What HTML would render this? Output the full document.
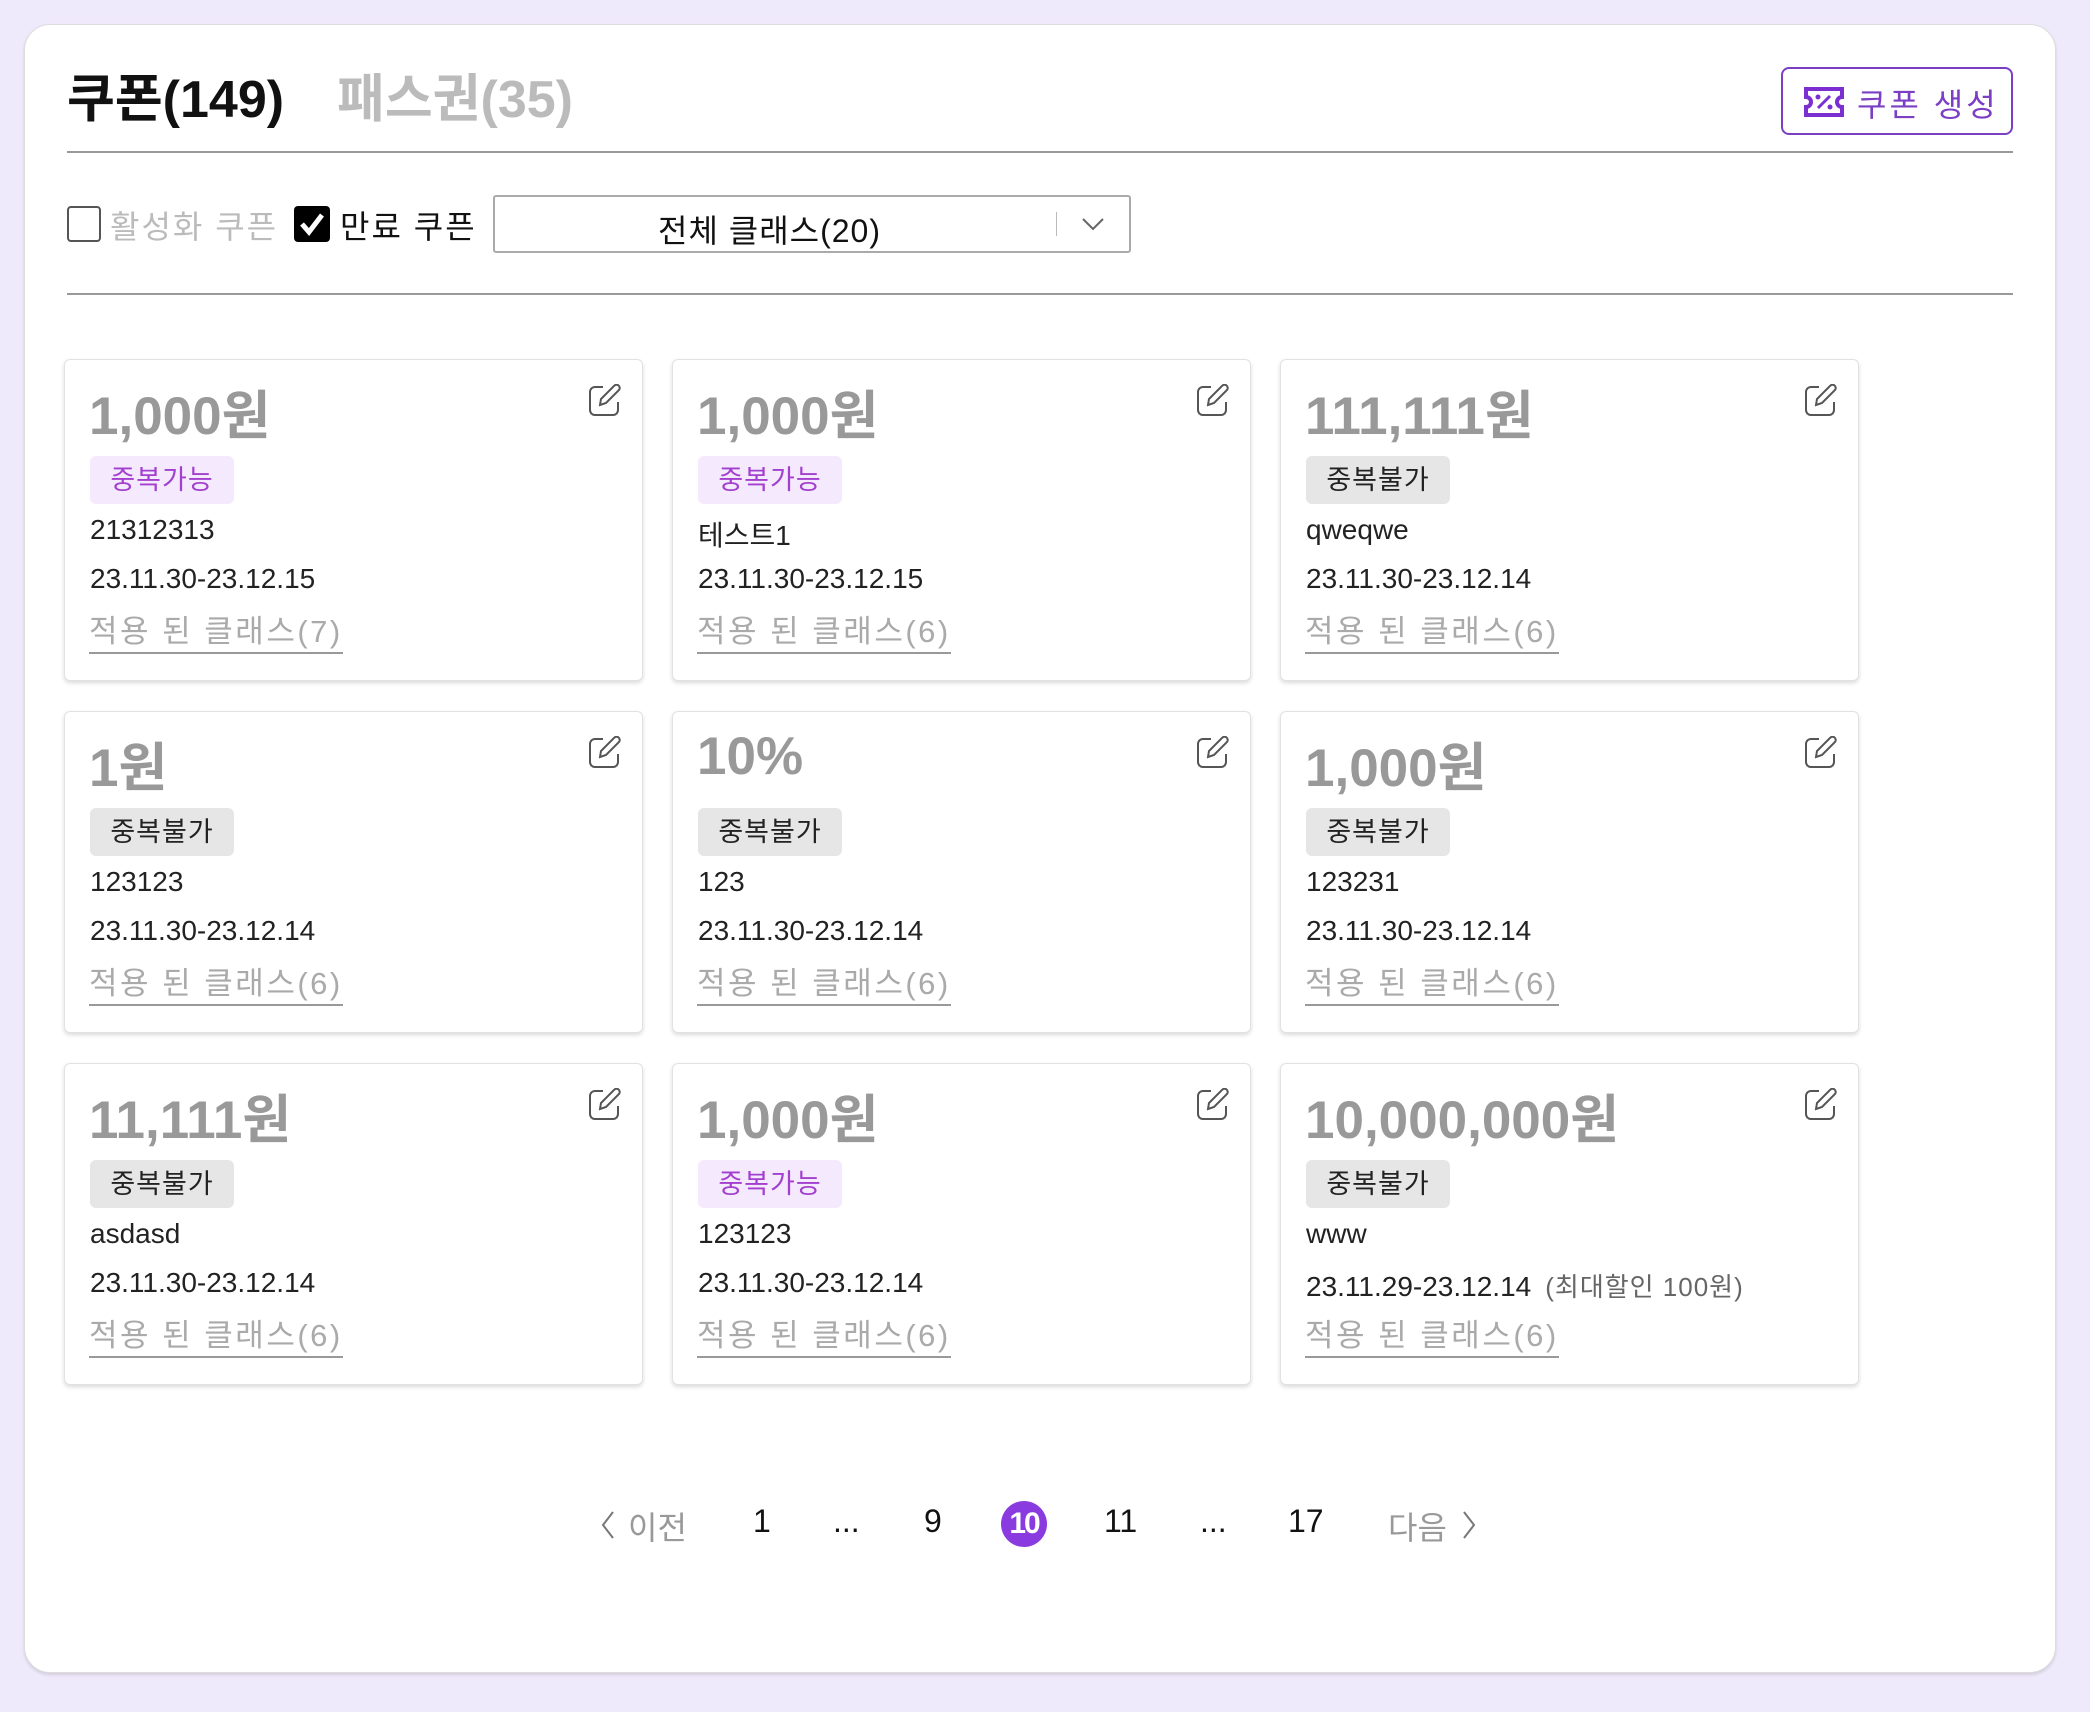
<!DOCTYPE html>
<html><head><meta charset="utf-8"><style>
*{margin:0;padding:0;box-sizing:border-box}
body{width:2090px;height:1712px;background:#efeafb;font-family:"Liberation Sans","Noto Sans CJK KR",sans-serif;position:relative;overflow:hidden;color:#111}
.panel{position:absolute;left:24px;top:24px;width:2032px;height:1649px;background:#fff;border-radius:26px;border:1px solid #ddd;box-shadow:0 2px 3px rgba(0,0,0,.12)}
.abs{position:absolute;white-space:nowrap}
.line{position:absolute;left:67px;width:1946px;height:2px;background:#9a9a9a}
.card{position:absolute;width:579px;height:322px;background:#fff;border:1px solid #e2e2e2;border-radius:6px;box-shadow:0 2px 4px rgba(0,0,0,.15)}
.amt{position:absolute;left:24px;top:14px;font-size:53px;font-weight:bold;color:#999;letter-spacing:0px}
.tag{position:absolute;left:25px;top:96px;width:144px;height:48px;border-radius:6px;font-size:27px;line-height:48px;text-align:center;letter-spacing:1px}
.tp{background:#f5eafd;color:#a23fcf}
.tg{background:#e6e6e6;color:#222}
.nm{position:absolute;left:25px;top:154px;font-size:28px;color:#222}
.dt{position:absolute;left:25px;top:203px;font-size:28px;color:#222}
.dt span{font-size:26px;color:#666;margin-left:14px;letter-spacing:1px}
.lk{position:absolute;left:24px;top:252px;font-size:31px;color:#aaa;border-bottom:2px solid #999;line-height:40px;letter-spacing:2.5px}
.ed{position:absolute;left:522px;top:24px}
.pg{position:absolute;top:1503px;font-size:32px;color:#111}
</style></head><body>
<div class="panel"></div>
<div class="abs" style="left:67px;top:68px;font-size:52px;font-weight:bold;color:#111;line-height:64px">쿠폰(149)</div>
<div class="abs" style="left:337px;top:68px;font-size:52px;font-weight:bold;color:#bbb;line-height:64px">패스권(35)</div>
<div class="abs" style="left:1781px;top:67px;width:232px;height:68px;border:2px solid #7b3fc4;border-radius:8px"></div>
<svg class="abs" style="left:1803px;top:86px" width="42" height="32" viewBox="0 0 42 32"><path d="M3 3h36v8a5 5 0 0 0 0 10v8H3v-8a5 5 0 0 0 0-10z" fill="none" stroke="#7b2fd0" stroke-width="4"/><path d="M15 22L27 10" stroke="#7b2fd0" stroke-width="3"/><circle cx="15" cy="11" r="2.5" fill="#7b2fd0"/><circle cx="27" cy="21" r="2.5" fill="#7b2fd0"/></svg>
<div class="abs" style="left:1857px;top:80px;font-size:32px;color:#7b3fc4;letter-spacing:3px">쿠폰 생성</div>
<div class="line" style="top:151px"></div>
<div class="abs" style="left:67px;top:206px;width:34px;height:36px;border:2px solid #555;border-radius:4px"></div>
<div class="abs" style="left:110px;top:202px;font-size:32px;color:#bbb;letter-spacing:2px">활성화 쿠픈</div>
<div class="abs" style="left:294px;top:206px;width:36px;height:36px;background:#000;border-radius:4px"></div>
<svg class="abs" style="left:294px;top:206px" width="36" height="36"><path d="M8 18l7 8 13-17" fill="none" stroke="#fff" stroke-width="5"/></svg>
<div class="abs" style="left:340px;top:202px;font-size:32px;color:#111;letter-spacing:2px">만료 쿠픈</div>
<div class="abs" style="left:493px;top:195px;width:638px;height:58px;border:2px solid #aaa;border-radius:3px"></div>
<div class="abs" style="left:658px;top:206px;font-size:32px;color:#111;letter-spacing:1px">전체 클래스(20)</div>
<div class="abs" style="left:1056px;top:212px;width:1px;height:24px;background:#bbb"></div>
<svg class="abs" style="left:1081px;top:216px" width="24" height="16"><path d="M2 3l10 10 10-10" fill="none" stroke="#666" stroke-width="2"/></svg>
<div class="line" style="top:293px"></div>

<div class="card" style="left:64px;top:359px"><div class="amt">1,000원</div><div class="tag tp">중복가능</div><div class="nm">21312313</div><div class="dt">23.11.30-23.12.15</div><div class="lk">적용 된 클래스(7)</div><svg class="ed" width="34" height="34" viewBox="0 0 34 34"><path d="M16 3H8a5 5 0 0 0-5 5v18a5 5 0 0 0 5 5h18a5 5 0 0 0 5-5v-8" fill="none" stroke="#555" stroke-width="2"/><path d="M13 21l1-6L27 2a3 3 0 0 1 5 4L19 19z" fill="none" stroke="#555" stroke-width="2"/></svg></div>
<div class="card" style="left:672px;top:359px"><div class="amt">1,000원</div><div class="tag tp">중복가능</div><div class="nm">테스트1</div><div class="dt">23.11.30-23.12.15</div><div class="lk">적용 된 클래스(6)</div><svg class="ed" width="34" height="34" viewBox="0 0 34 34"><path d="M16 3H8a5 5 0 0 0-5 5v18a5 5 0 0 0 5 5h18a5 5 0 0 0 5-5v-8" fill="none" stroke="#555" stroke-width="2"/><path d="M13 21l1-6L27 2a3 3 0 0 1 5 4L19 19z" fill="none" stroke="#555" stroke-width="2"/></svg></div>
<div class="card" style="left:1280px;top:359px"><div class="amt">111,111원</div><div class="tag tg">중복불가</div><div class="nm">qweqwe</div><div class="dt">23.11.30-23.12.14</div><div class="lk">적용 된 클래스(6)</div><svg class="ed" width="34" height="34" viewBox="0 0 34 34"><path d="M16 3H8a5 5 0 0 0-5 5v18a5 5 0 0 0 5 5h18a5 5 0 0 0 5-5v-8" fill="none" stroke="#555" stroke-width="2"/><path d="M13 21l1-6L27 2a3 3 0 0 1 5 4L19 19z" fill="none" stroke="#555" stroke-width="2"/></svg></div>

<div class="card" style="left:64px;top:711px"><div class="amt">1원</div><div class="tag tg">중복불가</div><div class="nm">123123</div><div class="dt">23.11.30-23.12.14</div><div class="lk">적용 된 클래스(6)</div><svg class="ed" width="34" height="34" viewBox="0 0 34 34"><path d="M16 3H8a5 5 0 0 0-5 5v18a5 5 0 0 0 5 5h18a5 5 0 0 0 5-5v-8" fill="none" stroke="#555" stroke-width="2"/><path d="M13 21l1-6L27 2a3 3 0 0 1 5 4L19 19z" fill="none" stroke="#555" stroke-width="2"/></svg></div>
<div class="card" style="left:672px;top:711px"><div class="amt">10%</div><div class="tag tg">중복불가</div><div class="nm">123</div><div class="dt">23.11.30-23.12.14</div><div class="lk">적용 된 클래스(6)</div><svg class="ed" width="34" height="34" viewBox="0 0 34 34"><path d="M16 3H8a5 5 0 0 0-5 5v18a5 5 0 0 0 5 5h18a5 5 0 0 0 5-5v-8" fill="none" stroke="#555" stroke-width="2"/><path d="M13 21l1-6L27 2a3 3 0 0 1 5 4L19 19z" fill="none" stroke="#555" stroke-width="2"/></svg></div>
<div class="card" style="left:1280px;top:711px"><div class="amt">1,000원</div><div class="tag tg">중복불가</div><div class="nm">123231</div><div class="dt">23.11.30-23.12.14</div><div class="lk">적용 된 클래스(6)</div><svg class="ed" width="34" height="34" viewBox="0 0 34 34"><path d="M16 3H8a5 5 0 0 0-5 5v18a5 5 0 0 0 5 5h18a5 5 0 0 0 5-5v-8" fill="none" stroke="#555" stroke-width="2"/><path d="M13 21l1-6L27 2a3 3 0 0 1 5 4L19 19z" fill="none" stroke="#555" stroke-width="2"/></svg></div>

<div class="card" style="left:64px;top:1063px"><div class="amt">11,111원</div><div class="tag tg">중복불가</div><div class="nm">asdasd</div><div class="dt">23.11.30-23.12.14</div><div class="lk">적용 된 클래스(6)</div><svg class="ed" width="34" height="34" viewBox="0 0 34 34"><path d="M16 3H8a5 5 0 0 0-5 5v18a5 5 0 0 0 5 5h18a5 5 0 0 0 5-5v-8" fill="none" stroke="#555" stroke-width="2"/><path d="M13 21l1-6L27 2a3 3 0 0 1 5 4L19 19z" fill="none" stroke="#555" stroke-width="2"/></svg></div>
<div class="card" style="left:672px;top:1063px"><div class="amt">1,000원</div><div class="tag tp">중복가능</div><div class="nm">123123</div><div class="dt">23.11.30-23.12.14</div><div class="lk">적용 된 클래스(6)</div><svg class="ed" width="34" height="34" viewBox="0 0 34 34"><path d="M16 3H8a5 5 0 0 0-5 5v18a5 5 0 0 0 5 5h18a5 5 0 0 0 5-5v-8" fill="none" stroke="#555" stroke-width="2"/><path d="M13 21l1-6L27 2a3 3 0 0 1 5 4L19 19z" fill="none" stroke="#555" stroke-width="2"/></svg></div>
<div class="card" style="left:1280px;top:1063px"><div class="amt">10,000,000원</div><div class="tag tg">중복불가</div><div class="nm">www</div><div class="dt">23.11.29-23.12.14<span>(최대할인 100원)</span></div><div class="lk">적용 된 클래스(6)</div><svg class="ed" width="34" height="34" viewBox="0 0 34 34"><path d="M16 3H8a5 5 0 0 0-5 5v18a5 5 0 0 0 5 5h18a5 5 0 0 0 5-5v-8" fill="none" stroke="#555" stroke-width="2"/><path d="M13 21l1-6L27 2a3 3 0 0 1 5 4L19 19z" fill="none" stroke="#555" stroke-width="2"/></svg></div>

<svg class="abs" style="left:600px;top:1510px" width="16" height="30"><path d="M13 2L3 15l10 13" fill="none" stroke="#777" stroke-width="2"/></svg>
<div class="pg" style="left:628px;color:#999">이전</div>
<div class="pg" style="left:753px">1</div>
<div class="pg" style="left:833px">...</div>
<div class="pg" style="left:924px">9</div>
<div class="abs" style="left:1001px;top:1501px;width:46px;height:46px;border-radius:50%;background:#8a3be0;color:#fff;font-size:30px;line-height:46px;text-align:center;font-weight:bold;letter-spacing:-2px">10</div>
<div class="pg" style="left:1104px">11</div>
<div class="pg" style="left:1200px">...</div>
<div class="pg" style="left:1288px">17</div>
<div class="pg" style="left:1388px;color:#999">다음</div>
<svg class="abs" style="left:1461px;top:1510px" width="16" height="30"><path d="M3 2l10 13L3 28" fill="none" stroke="#777" stroke-width="2"/></svg>
</body></html>
